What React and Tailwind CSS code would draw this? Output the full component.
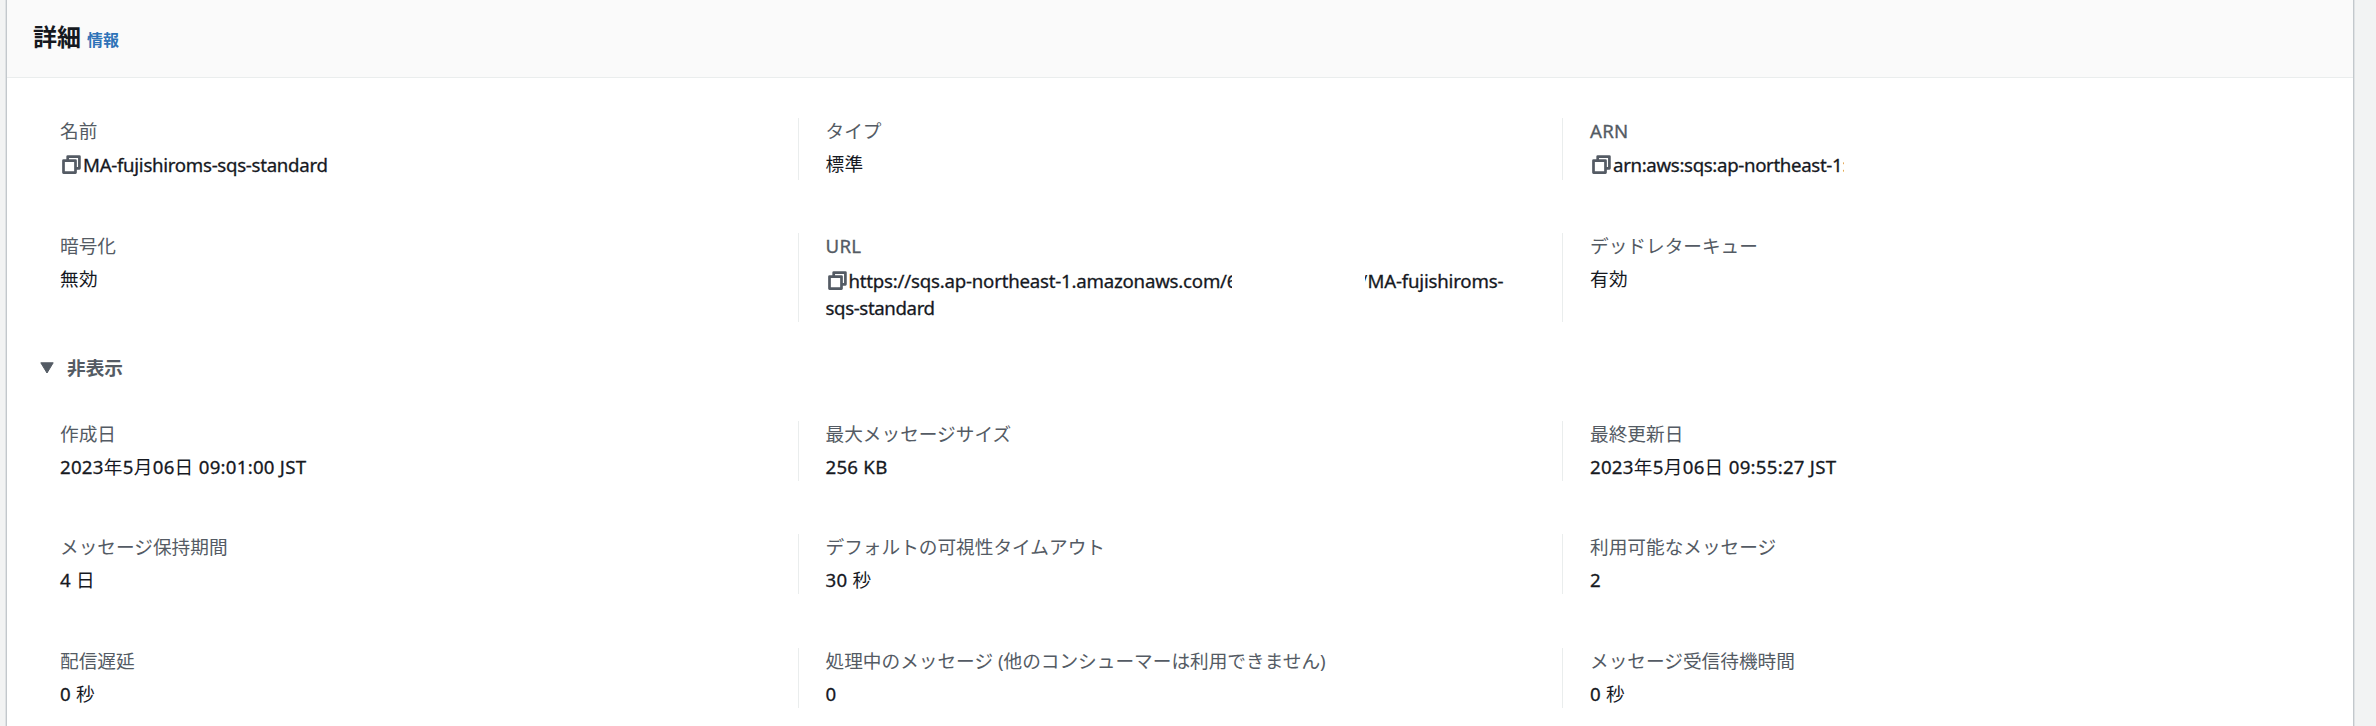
import React from "react";

function CopyIcon() {
  return (
    <svg viewBox="0 0 19 19" className="mr-[2px] ml-[2px] h-[19px] w-[19px] shrink-0" fill="none" stroke="#545b64" strokeWidth="2.7" strokeLinejoin="round">
      <path d="M5.7 5V1.6h11.7v11.7H14" />
      <path d="M1.5 5.6h12v12h-12z" />
    </svg>
  );
}

function Latin({ children, className = "tracking-[-0.29px]" }) {
  return <span className={`${className} whitespace-nowrap [-webkit-text-stroke:0.3px_currentColor]`}>{children}</span>;
}

// Latin letters and digits are drawn slightly heavier than the Japanese text.
function Mixed({ text }) {
  return text.split(/([\x20-\x7e]+)/).map((part, i) =>
    i % 2 ? (
      <Latin key={i} className="tracking-[0.25px]">{part}</Latin>
    ) : (
      <span key={i} className="tracking-[0.4px]">{part}</span>
    )
  );
}

function Field({ label, first, height, children }) {
  return (
    <div className={`${height} ${first ? "border-transparent pl-[26px]" : "border-[#eaeded] pl-[27px]"} border-l`}>
      <div className="mt-[-1px] mb-[6px] h-[27px] text-[#545b64]">{label}</div>
      <div className="text-[#16191f]">{typeof children === "string" ? <Mixed text={children} /> : children}</div>
    </div>
  );
}

function Row({ className, children }) {
  return <div className={`${className} grid grid-cols-[764.5px_764.5px_764.5px]`}>{children}</div>;
}

export default function App() {
  return (
    <div className="flex h-[726px] w-[2376px] overflow-hidden bg-[#f2f3f3] pl-[5px] font-['Noto_Sans','Noto_Sans_CJK_JP',sans-serif] text-[18.67px] leading-[27px]">
      <main className="h-[726px] w-[2350px] border-r border-l border-[#dfe2e4]">
        <div className="flow-root h-full border-r border-l border-[#c3c8cc] bg-white">
          <header className="flex h-[78px] items-baseline border-b border-[#eaeded] bg-[#fafafa] pt-[20px] pl-[26px]">
            <h2 className="text-[24px] leading-[34px] font-bold text-[#16191f]">詳細</h2>
            <a className="ml-[6px] text-[16px] font-bold text-[#2e73b8]">情報</a>
          </header>
          <section className="pt-[40px] pl-[26px]">
            <Row className="mb-[53px]">
              <Field label="名前" first height="h-[62px]">
                <div className="flex items-center pt-[1px]">
                  <CopyIcon />
                  <Latin>MA-fujishiroms-sqs-standard</Latin>
                </div>
              </Field>
              <Field label="タイプ" height="h-[62px]">標準</Field>
              <Field label={<Mixed text="ARN" />} height="h-[62px]">
                <div className="flex items-center pt-[1px]">
                  <CopyIcon />
                  <Latin className="tracking-[-0.34px]">arn:aws:sqs:ap-northeast-1</Latin>
                  <span className="w-[2px] overflow-hidden">:</span>
                </div>
              </Field>
            </Row>
            <Row className="mb-[32px]">
              <Field label="暗号化" first height="h-[89px]">無効</Field>
              <Field label={<Mixed text="URL" />} height="h-[89px]">
                <div className="flex items-center pt-[2px]">
                  <CopyIcon />
                  <span className="flex w-[383px] overflow-hidden">
                    <Latin className="tracking-[-0.22px]">https://sqs.ap-northeast-1.amazonaws.com/6</Latin>
                  </span>
                  <span className="ml-[133px] flex h-[27px] w-[3px] justify-end overflow-hidden">/</span>
                  <Latin className="tracking-[-0.2px]">MA-fujishiroms-</Latin>
                </div>
                <div><Latin className="tracking-[-0.38px]">sqs-standard</Latin></div>
              </Field>
              <Field label="デッドレターキュー" height="h-[89px]">有効</Field>
            </Row>
          </section>
          <div className="flex h-[27px] items-center pl-[33px] font-bold text-[#545b64]">
            <svg viewBox="0 0 14 12" className="mr-[13px] h-[12px] w-[14px]" fill="#545b64" stroke="#545b64" strokeLinejoin="round">
              <path d="M.8.8h12.4L7 11z" />
            </svg>
            <span>非表示</span>
          </div>
          <section className="pt-[40px] pl-[26px]">
            <Row className="mb-[53px]">
              <Field label="作成日" first height="h-[60px]">2023年5月06日 09:01:00 JST</Field>
              <Field label="最大メッセージサイズ" height="h-[60px]">256 KB</Field>
              <Field label="最終更新日" height="h-[60px]">2023年5月06日 09:55:27 JST</Field>
            </Row>
            <Row className="mb-[54px]">
              <Field label="メッセージ保持期間" first height="h-[60px]">4 日</Field>
              <Field label="デフォルトの可視性タイムアウト" height="h-[60px]">30 秒</Field>
              <Field label="利用可能なメッセージ" height="h-[60px]">2</Field>
            </Row>
            <Row className="">
              <Field label="配信遅延" first height="h-[60px]">0 秒</Field>
              <Field label="処理中のメッセージ (他のコンシューマーは利用できません)" height="h-[60px]">0</Field>
              <Field label="メッセージ受信待機時間" height="h-[60px]">0 秒</Field>
            </Row>
          </section>
        </div>
      </main>
    </div>
  );
}
